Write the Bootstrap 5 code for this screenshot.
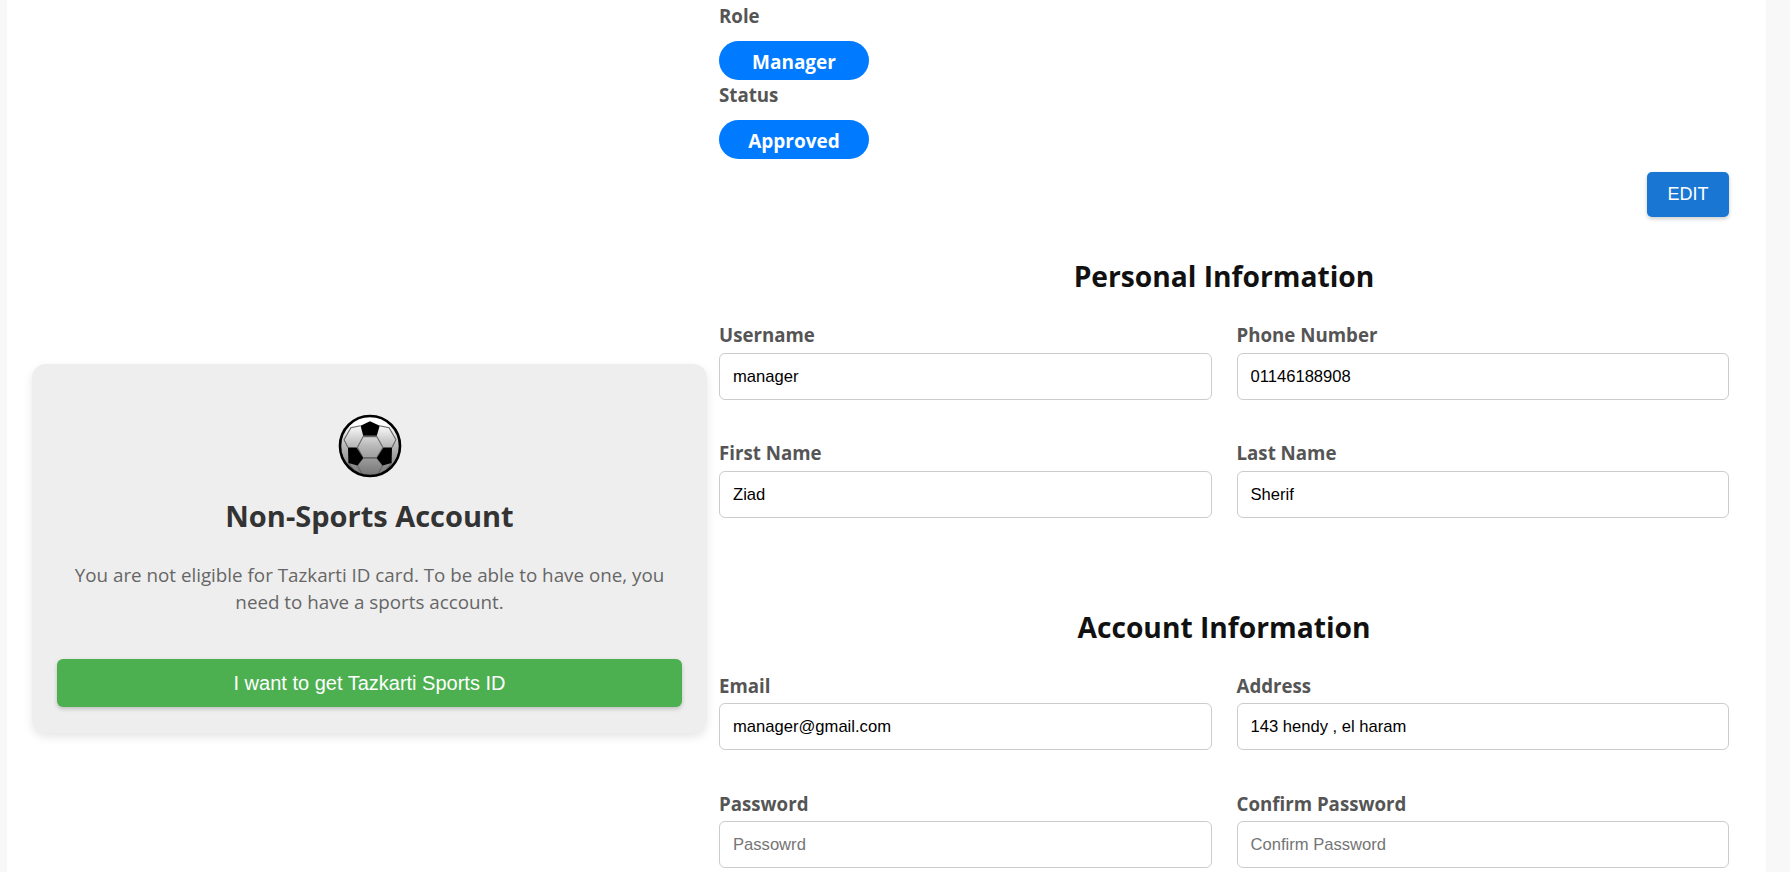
<!DOCTYPE html>
<html lang="en">
<head>
<meta charset="utf-8">
<title>Profile</title>
<link href="https://cdn.jsdelivr.net/npm/bootstrap@5.3.0/dist/css/bootstrap.min.css" rel="stylesheet">
<style>
html,body{height:872px;overflow:hidden;background:#f8f8f8;}
body{font-family:"Open Sans","Noto Sans",sans-serif;}
.shell{width:1759px;height:872px;margin-left:7px;background:#fff;padding:0 37px 0 25px;gap:12px;overflow:hidden;}
.left-pane{width:675px;flex:none;padding-top:364px;}
.right-pane{width:1010px;flex:none;}
.promo{height:369px;background:#eee;border-radius:14px;box-shadow:0 4px 10px rgba(0,0,0,.1);padding:50px 25px 0;text-align:center;}
.ball{width:64px;height:64px;display:block;margin:0 auto;}
.promo-title{font-size:29px;font-weight:700;color:#333;margin:19px 0 0;line-height:38px;}
.promo-text{font-size:18.8px;line-height:27px;color:#666;margin:27px 0 0;}
.promo-btn{width:100%;height:48px;margin-top:43px;background:#4caf50;color:#fff;border:0;border-radius:6px;font:20px "Liberation Sans",sans-serif;box-shadow:0 2px 4px rgba(0,0,0,.2);}
.field-label{font-size:18.7px;font-weight:700;color:#555;line-height:24px;display:block;margin:0;}
.pill{width:150px;height:39px;background:#007bff;color:#fff;border-radius:20px;font-size:19px;font-weight:700;line-height:43px;text-align:center;}
.role-block{height:41px;padding-top:4px;}
.role-block.second{height:40px;padding-top:3px;}
.edit-btn{background:#1976d2;color:#fff;border:0;border-radius:5px;width:82px;height:45px;font:18px "Liberation Sans",sans-serif;box-shadow:0 2px 4px rgba(0,0,0,.2);}
.edit-row{margin-top:13px;}
.sec-title{font-size:28.2px;font-weight:700;color:#111;line-height:40px;text-align:center;margin:0;}
.title-personal{margin-top:39px;}
.title-account{margin-top:48px;}
.fields{--bs-gutter-x:25px;--bs-gutter-y:0;margin-top:27px;}
.field{height:118px;}
.field-input{height:47px;border:1px solid #ccc;border-radius:6px;padding:0 13px;font:16.6px "Liberation Sans",sans-serif;color:#000;margin-top:6px;}
.fields-account .field-input{margin-top:5px;}
.field-input:focus{box-shadow:none;border-color:#ccc;}
.field-input::placeholder{color:#757575;}
</style>
</head>
<body>
<div class="shell d-flex">
  <div class="left-pane">
    <div class="promo">
      <svg class="ball" viewBox="0 0 64 64" role="img" aria-label="Football">
        <defs><linearGradient id="g" x1="0" y1="0" x2="0" y2="1"><stop offset="0" stop-color="#fff"/><stop offset=".14" stop-color="#fff"/><stop offset=".5" stop-color="#b8b8b8"/><stop offset="1" stop-color="#747474"/></linearGradient></defs>
        <circle cx="32" cy="32" r="30" fill="url(#g)"/>
        <g fill="none" stroke="#666" stroke-width="1.1">
          <path d="M25.2 22.6h13.6l6.1 11-6.1 10.3H25.2l-5.8-10.3z"/>
          <path d="M22.6 11.700l-9.700 2-6.900 12 4 7.900M41.400 11.700l9.700 2 6.900 12-4 7.900"/>
          <path d="M25.200 43.900l13.600 0 5.800 7.500-5.800 10.600M25.200 43.900l-5.800 7.500 5.800 10.600"/>
          <path d="M10.400 49l7 9M53.600 49l-7 9"/>
        </g>
        <path d="M32 7.200l9.700 4.500-2.900 10H25.200l-2.600-10z" fill="#000"/>
        <path d="M10 33.600h8.500l6.700 10.300-5.800 7.500-9-2.400z" fill="#000"/>
        <path d="M54 33.600h-8.500l-6.700 10.300 5.800 7.500 9-2.400z" fill="#000"/>
        <circle cx="32" cy="32" r="30" fill="none" stroke="#000" stroke-width="2.600"/>
      </svg>
      <h2 class="promo-title">Non-Sports Account</h2>
      <p class="promo-text">You are not eligible for Tazkarti ID card. To be able to have one, you need to have a sports account.</p>
      <button class="promo-btn" type="button">I want to get Tazkarti Sports ID</button>
    </div>
  </div>
  <div class="right-pane">
    <div class="role-block"><label class="field-label">Role</label></div>
    <div class="pill">Manager</div>
    <div class="role-block second"><label class="field-label">Status</label></div>
    <div class="pill">Approved</div>
    <div class="d-flex justify-content-end edit-row"><button class="edit-btn" type="button">EDIT</button></div>
    <h3 class="sec-title title-personal">Personal Information</h3>
    <div class="row fields">
      <div class="col-6 field"><label class="field-label">Username</label><input class="form-control field-input" value="manager"></div>
      <div class="col-6 field"><label class="field-label">Phone Number</label><input class="form-control field-input" value="01146188908"></div>
      <div class="col-6 field"><label class="field-label">First Name</label><input class="form-control field-input" value="Ziad"></div>
      <div class="col-6 field"><label class="field-label">Last Name</label><input class="form-control field-input" value="Sherif"></div>
    </div>
    <h3 class="sec-title title-account">Account Information</h3>
    <div class="row fields fields-account">
      <div class="col-6 field"><label class="field-label">Email</label><input class="form-control field-input" value="manager@gmail.com"></div>
      <div class="col-6 field"><label class="field-label">Address</label><input class="form-control field-input" value="143 hendy , el haram"></div>
      <div class="col-6 field"><label class="field-label">Password</label><input class="form-control field-input" placeholder="Passowrd"></div>
      <div class="col-6 field"><label class="field-label">Confirm Password</label><input class="form-control field-input" placeholder="Confirm Password"></div>
    </div>
  </div>
</div>
<script src="https://cdn.jsdelivr.net/npm/bootstrap@5.3.0/dist/js/bootstrap.bundle.min.js"></script>
</body>
</html>
